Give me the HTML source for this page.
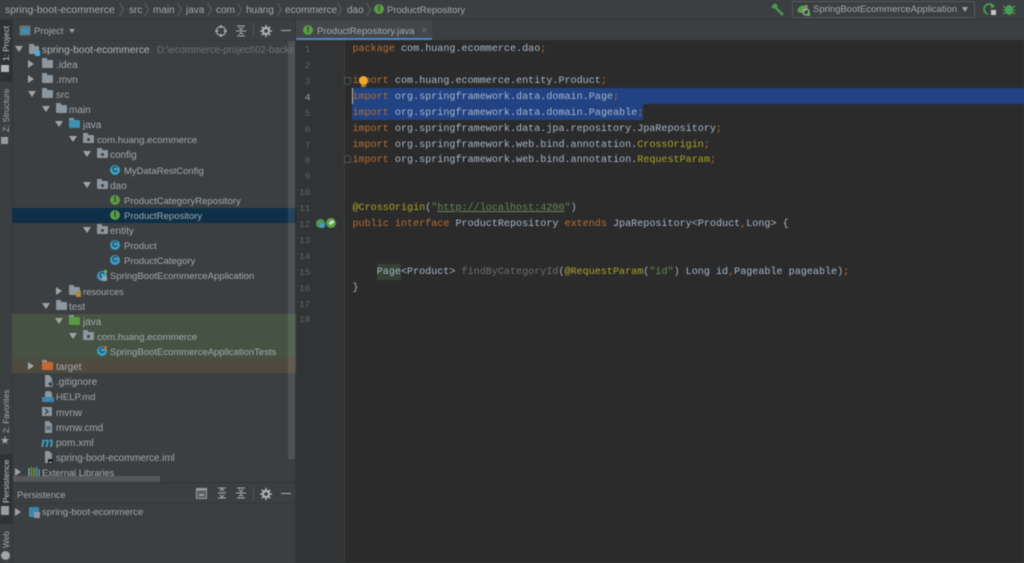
<!DOCTYPE html>
<html><head><meta charset="utf-8"><style>
html,body{margin:0;padding:0;width:1024px;height:563px;overflow:hidden;background:#3c3f41}
#w{position:absolute;left:0;top:0;width:1024px;height:563px;overflow:hidden;font-family:"Liberation Sans",sans-serif;color:#a4a9ad;filter:blur(.45px)}
.a{position:absolute}
.t{position:absolute;white-space:nowrap;font-size:10px;line-height:14px;height:14px;margin-top:2px}
.c{font-size:9.5px}
.ar{position:absolute;width:0;height:0}
.d{border-left:4px solid transparent;border-right:4px solid transparent;border-top:6px solid #a0a4a7}
.r{border-top:4px solid transparent;border-bottom:4px solid transparent;border-left:6px solid #a0a4a7}
.f{position:absolute;width:11px;height:8px;background:#8d979f;border-radius:1px}
.f:before{content:"";position:absolute;left:0;top:-2px;width:5px;height:2px;background:#8d979f}
.p:after{content:"";position:absolute;left:4px;top:3px;width:3px;height:3px;background:#3c3f41;border-radius:50%}
.ic{position:absolute;width:10px;height:10px;border-radius:50%;color:#2f3a40;font:bold 8px/10px "Liberation Sans",sans-serif;text-align:center}
.cc{background:#3b9fc6}.ii{background:#5b9b45}
.l{position:absolute;left:352.5px;height:16px;font:10.1px/16px "Liberation Mono",monospace;color:#a9b7c6;white-space:pre;margin-top:1.7px}
.n{position:absolute;left:296px;width:14.5px;text-align:right;font:9.5px/16px "Liberation Mono",monospace;color:#606366;margin-top:1.7px}
.k{color:#b96d2f}.y{color:#a8a428}.s{color:#6a8759}.g{color:#6b6f72}
.v{position:absolute;writing-mode:vertical-rl;transform:rotate(180deg);font-size:8.3px;line-height:12px;white-space:nowrap;color:#a4a9ad;left:0;width:12px;text-align:left}
.se{position:absolute;top:3px}
</style></head><body><div id="w">

<!-- backgrounds -->
<div class="a" style="left:296px;top:40px;width:728px;height:523px;background:#2b2b2b"></div>
<div class="a" style="left:296px;top:40px;width:48px;height:523px;background:#313335"></div>
<div class="a" style="left:344px;top:40px;width:1px;height:523px;background:#3a3c3e"></div>
<div class="a" style="left:0;top:19px;width:1024px;height:1px;background:#323436"></div>
<div class="a" style="left:12px;top:40px;width:284px;height:1px;background:#35383a"></div>
<div class="a" style="left:0;top:20px;width:12px;height:543px;background:#3c3f41"></div>
<div class="a" style="left:12px;top:20px;width:1px;height:543px;background:#333537"></div>
<div class="a" style="left:295px;top:20px;width:1px;height:543px;background:#323436"></div>
<div class="a" style="left:0;top:20px;width:12px;height:62px;background:#2f3133"></div>
<div class="a" style="left:0;top:454px;width:12px;height:70px;background:#2f3133"></div>

<!-- row highlights -->
<div class="a" style="left:12px;top:208px;width:284px;height:15px;background:#0d2f47"></div>
<div class="a" style="left:12px;top:314px;width:284px;height:44px;background:#465243"></div>
<div class="a" style="left:12px;top:358px;width:284px;height:15px;background:#4f4a40"></div>

<!-- scrollbars -->
<div class="a" style="left:288px;top:41px;width:7px;height:418px;background:rgba(255,255,255,.1)"></div>
<div class="a" style="left:13px;top:482px;width:283px;height:1px;background:#323436"></div>
<div class="a" style="left:13px;top:503px;width:283px;height:1px;background:#35383a"></div>

<!-- breadcrumb -->
<div class="t" style="left:5px;top:2px;font-size:10.4px">spring-boot-ecommerce</div>
<svg class="se" style="left:119px" width="5" height="13" viewBox="0 0 5 13"><path d="M.5 0L4.500 6.500L.5 13" fill="none" stroke="#5f6264"/></svg>
<div class="t" style="left:129px;top:2px">src</div>
<svg class="se" style="left:144px" width="5" height="13" viewBox="0 0 5 13"><path d="M.5 0L4.500 6.500L.5 13" fill="none" stroke="#5f6264"/></svg>
<div class="t" style="left:153px;top:2px">main</div>
<svg class="se" style="left:177px" width="5" height="13" viewBox="0 0 5 13"><path d="M.5 0L4.500 6.500L.5 13" fill="none" stroke="#5f6264"/></svg>
<div class="t" style="left:186px;top:2px">java</div>
<svg class="se" style="left:207px" width="5" height="13" viewBox="0 0 5 13"><path d="M.5 0L4.500 6.500L.5 13" fill="none" stroke="#5f6264"/></svg>
<div class="t" style="left:216px;top:2px">com</div>
<svg class="se" style="left:237px" width="5" height="13" viewBox="0 0 5 13"><path d="M.5 0L4.500 6.500L.5 13" fill="none" stroke="#5f6264"/></svg>
<div class="t" style="left:246px;top:2px">huang</div>
<svg class="se" style="left:277px" width="5" height="13" viewBox="0 0 5 13"><path d="M.5 0L4.500 6.500L.5 13" fill="none" stroke="#5f6264"/></svg>
<div class="t" style="left:285px;top:2px">ecommerce</div>
<svg class="se" style="left:337px" width="5" height="13" viewBox="0 0 5 13"><path d="M.5 0L4.500 6.500L.5 13" fill="none" stroke="#5f6264"/></svg>
<div class="t" style="left:347px;top:2px">dao</div>
<svg class="se" style="left:366px" width="5" height="13" viewBox="0 0 5 13"><path d="M.5 0L4.500 6.500L.5 13" fill="none" stroke="#5f6264"/></svg>
<div class="ic ii" style="left:374px;top:4px">I</div>
<div class="t c" style="left:387px;top:2px">ProductRepository</div>

<!-- run toolbar -->
<svg class="a" style="left:770px;top:2px" width="16" height="15" viewBox="0 0 16 15"><path d="M1 5 L5 1 L8 4 L5 7 Z" fill="#499c54"/><path d="M6 6 L13 13" stroke="#499c54" stroke-width="2.4"/></svg>
<div class="a" style="left:792px;top:1px;width:181px;height:15px;border:1px solid #55585a;border-radius:2px"></div>
<svg class="a" style="left:797px;top:4px" width="14" height="12" viewBox="0 0 14 12"><path d="M0 7 C1 2 6 1 11 1 C11 6 8 9 3 9 Z" fill="#5d9b47"/><circle cx="9" cy="8" r="3" fill="none" stroke="#aeb2b5" stroke-width="1.2"/><rect x="10" y="9" width="3" height="3" fill="#2ecc40"/></svg>
<div class="t" style="left:813px;top:1px;font-size:9.5px">SpringBootEcommerceApplication</div>
<div class="ar" style="left:962px;top:7px;border-left:3.5px solid transparent;border-right:3.5px solid transparent;border-top:5px solid #a0a4a7"></div>
<svg class="a" style="left:983px;top:2px" width="14" height="14" viewBox="0 0 14 14"><path d="M10 4 A5 5 0 1 0 5 12" fill="none" stroke="#499c54" stroke-width="1.8"/><path d="M8 1 L12 4 L8 7 Z" fill="#499c54"/><rect x="8" y="8" width="5" height="5" fill="#c4c6c8"/></svg>
<svg class="a" style="left:1002px;top:3px" width="14" height="13" viewBox="0 0 14 13"><ellipse cx="7" cy="7" rx="4" ry="5" fill="#499c54"/><path d="M1 3 L4 5 M13 3 L10 5 M1 7 H3 M13 7 H11 M1 11 L4 9 M13 11 L10 9" stroke="#499c54" stroke-width="1.2"/></svg>

<!-- project header -->
<svg class="a" style="left:19px;top:25px" width="12" height="11" viewBox="0 0 12 11"><rect x=".5" y=".5" width="11" height="10" fill="#6b7073" /><rect x="2" y="3" width="8" height="6" fill="#3f8fb5"/></svg>
<div class="t" style="left:34px;top:23px;font-size:9.5px">Project</div>
<div class="ar" style="left:69px;top:29px;border-left:3.5px solid transparent;border-right:3.5px solid transparent;border-top:4.5px solid #a0a4a7"></div>
<svg class="a" style="left:215px;top:25px" width="12" height="12" viewBox="0 0 12 12"><circle cx="6" cy="6" r="4.6" fill="none" stroke="#afb1b3" stroke-width="1.2"/><path d="M6 0V3.5M6 8.5V12M0 6H3.5M8.5 6H12" stroke="#afb1b3" stroke-width="1.2"/></svg>
<svg class="a" style="left:236px;top:25px" width="10" height="12" viewBox="0 0 10 12"><path d="M0 6H10M1 1H9M1 11H9" stroke="#afb1b3"/><path d="M3 2.5L5 4.5L7 2.5M3 9.5L5 7.5L7 9.5" stroke="#afb1b3" fill="none"/></svg>
<div class="a" style="left:253px;top:23px;width:1px;height:14px;background:#4d5052"></div>
<svg class="a" style="left:260px;top:25px" width="12" height="12" viewBox="0 0 12 12"><circle cx="6" cy="6" r="3" fill="none" stroke="#afb1b3" stroke-width="2.2"/><path d="M6 0V2.5M6 9.5V12M0 6H2.5M9.5 6H12M1.8 1.8L3.4 3.4M8.6 8.6L10.2 10.2M1.8 10.2L3.4 8.6M8.6 3.4L10.2 1.8" stroke="#afb1b3" stroke-width="1.6"/></svg>
<div class="a" style="left:281px;top:30px;width:10px;height:1.3px;background:#afb1b3"></div>

<!-- tabs -->
<div class="a" style="left:296px;top:20px;width:136px;height:18px;background:#43474a"></div>
<div class="a" style="left:296px;top:38px;width:136px;height:2px;background:#4a88c7"></div>
<div class="ic ii" style="left:303px;top:25px">I</div>
<div class="t" style="left:317px;top:23px;font-size:9.5px">ProductRepository.java</div>
<div class="t" style="left:421px;top:22px;color:#6f7274;font-size:11px">×</div>

<!-- tree -->
<div class="ar d" style="left:15px;top:46px"></div>
<div class="f" style="left:29px;top:46px;width:10px"></div>
<div class="a" style="left:35px;top:51px;width:5px;height:5px;background:#3fb4e8"></div>
<div class="t" style="left:42px;top:41.500px;font-size:10.2px;color:#b0b4b7">spring-boot-ecommerce</div>
<div class="t" style="left:157px;top:41.500px;color:#6f7376;font-size:9.700px;width:138px;overflow:hidden">D:\ecommerce-project\02-backend</div>

<div class="ar r" style="left:28px;top:60px"></div><div class="f" style="left:42px;top:60px"></div><div class="t" style="left:56px;top:57px">.idea</div>
<div class="ar r" style="left:28px;top:75px"></div><div class="f" style="left:42px;top:75px"></div><div class="t" style="left:56px;top:72px">.mvn</div>
<div class="ar d" style="left:28px;top:91px"></div><div class="f" style="left:42px;top:90px"></div><div class="t" style="left:56px;top:87px">src</div>
<div class="ar d" style="left:42px;top:106px"></div><div class="f" style="left:56px;top:105px"></div><div class="t" style="left:69px;top:102px">main</div>
<div class="ar d" style="left:55px;top:121px"></div><div class="f" style="left:69px;top:120px;background:#3f8fb5"></div><div class="t" style="left:83px;top:117px">java</div>
<div class="ar d" style="left:69px;top:136px"></div><div class="f p" style="left:83px;top:135px"></div><div class="t" style="left:97px;top:132px;font-size:9.6px">com.huang.ecommerce</div>
<div class="ar d" style="left:83px;top:151px"></div><div class="f p" style="left:97px;top:150px"></div><div class="t" style="left:110px;top:147px">config</div>
<div class="ic cc" style="left:110px;top:165px">C</div><div class="t c" style="left:124px;top:163px">MyDataRestConfig</div>
<div class="ar d" style="left:83px;top:182px"></div><div class="f p" style="left:97px;top:181px"></div><div class="t" style="left:110px;top:178px">dao</div>
<div class="ic ii" style="left:110px;top:195px">I</div><div class="t c" style="left:124px;top:193px">ProductCategoryRepository</div>
<div class="ic ii" style="left:110px;top:210px">I</div><div class="t c" style="left:124px;top:208px">ProductRepository</div>
<div class="ar d" style="left:83px;top:227px"></div><div class="f p" style="left:97px;top:226px"></div><div class="t" style="left:110px;top:223px">entity</div>
<div class="ic cc" style="left:110px;top:240px">C</div><div class="t c" style="left:124px;top:238px">Product</div>
<div class="ic cc" style="left:110px;top:255px">C</div><div class="t c" style="left:124px;top:253px">ProductCategory</div>
<div class="ic cc" style="left:97px;top:271px">C</div><div class="a" style="left:104px;top:270px;width:3px;height:3px;background:#5cb85c"></div><div class="a" style="left:102px;top:276px;width:5px;height:5px;background:#8fa3ad"></div><div class="t c" style="left:110px;top:268px">SpringBootEcommerceApplication</div>
<div class="ar r" style="left:56px;top:287px"></div><div class="f" style="left:69px;top:287px"></div><div class="a" style="left:76px;top:291px;width:5px;height:6px;background:#b08a3c"></div><div class="t" style="left:83px;top:283px;font-size:9.3px">resources</div>
<div class="ar d" style="left:42px;top:303px"></div><div class="f" style="left:56px;top:302px"></div><div class="t" style="left:69px;top:299px">test</div>
<div class="ar d" style="left:55px;top:318px"></div><div class="f" style="left:69px;top:317px;background:#5a9a40"></div><div class="t" style="left:83px;top:314px">java</div>
<div class="ar d" style="left:69px;top:333px"></div><div class="f p" style="left:83px;top:332px"></div><div class="t" style="left:97px;top:329px;font-size:9.6px">com.huang.ecommerce</div>
<div class="ic cc" style="left:97px;top:346px">C</div><div class="a" style="left:104px;top:346px;width:3px;height:3px;background:#c9652c"></div><div class="t c" style="left:110px;top:344px">SpringBootEcommerceApplicationTests</div>
<div class="ar r" style="left:28px;top:362px"></div><div class="f" style="left:42px;top:362px;background:#c46a30"></div><div class="t" style="left:56px;top:359px">target</div>

<svg class="a" style="left:43px;top:375px" width="10" height="12" viewBox="0 0 10 12"><path d="M2 0H6L9 3V12H2Z" fill="#8d979f"/><circle cx="7.5" cy="9" r="2.4" fill="#3c3f41" stroke="#8d979f"/></svg>
<div class="t" style="left:56px;top:374px">.gitignore</div>
<svg class="a" style="left:42px;top:391px" width="12" height="12" viewBox="0 0 12 12"><path d="M4 0H8L10 2V6H3V2Z" fill="#8d979f"/><rect y="6" width="12" height="5" fill="#3a87ad"/></svg>
<div class="t c" style="left:56px;top:389px">HELP.md</div>
<svg class="a" style="left:42px;top:407px" width="11" height="10" viewBox="0 0 11 10"><rect width="10" height="9" fill="#8d979f"/><path d="M3 2L6 4.500L3 7" stroke="#3c3f41" stroke-width="1.4" fill="none"/></svg>
<div class="t" style="left:56px;top:405px">mvnw</div>
<svg class="a" style="left:43px;top:421px" width="10" height="12" viewBox="0 0 10 12"><path d="M2 0H6L9 3V12H2Z" fill="#8d979f"/><path d="M3.500 6H7.500M3.500 8H7.500" stroke="#3c3f41"/></svg>
<div class="t" style="left:56px;top:420px">mvnw.cmd</div>
<div class="t" style="left:41px;top:433px;color:#3b9fc6;font:italic bold 14px/14px 'Liberation Sans',sans-serif">m</div>
<div class="t" style="left:56px;top:435px">pom.xml</div>
<svg class="a" style="left:43px;top:451px" width="11" height="13" viewBox="0 0 11 13"><path d="M2 0H6L9 3V12H2Z" fill="#8d979f"/><rect x="5" y="8" width="5" height="5" fill="#1d1d1d"/><rect x="6" y="11" width="3" height="1" fill="#ccc"/></svg>
<div class="t" style="left:56px;top:450px;font-size:9.8px">spring-boot-ecommerce.iml</div>
<div class="ar r" style="left:15px;top:468px"></div>
<svg class="a" style="left:28px;top:467px" width="12" height="10" viewBox="0 0 12 10"><path d="M1 1V10" stroke="#8d979f" stroke-width="1.500"/><path d="M3.500 0V10" stroke="#5b9b45" stroke-width="1.500"/><path d="M6 1V10" stroke="#a8a428" stroke-width="1.200"/><path d="M8.500 0V10" stroke="#3b9fc6" stroke-width="1.500"/><path d="M11 2V10" stroke="#8d979f" stroke-width="1.200"/></svg>
<div class="t" style="left:42px;top:464px;font-size:9.3px">External Libraries</div>
<div class="a" style="left:13px;top:475.500px;width:147px;height:6px;background:rgba(90,92,94,.85)"></div>

<!-- Persistence panel -->
<div class="t" style="left:17px;top:485.500px;font-size:9.3px">Persistence</div>
<svg class="a" style="left:196px;top:488px" width="11" height="11" viewBox="0 0 11 11"><rect x=".5" y=".5" width="10" height="10" fill="#5a5d5f" stroke="#9a9d9f"/><rect x="1" y="1" width="9" height="1.500" fill="#9a9d9f"/><rect x="3" y="6" width="5" height="2" fill="#9a9d9f"/></svg>
<svg class="a" style="left:217px;top:487px" width="10" height="12" viewBox="0 0 10 12"><path d="M1 1H9M1 11H9M1 6H9" stroke="#afb1b3"/><path d="M3 4L5 2L7 4M3 8L5 10L7 8" stroke="#afb1b3" fill="none"/></svg>
<svg class="a" style="left:236px;top:487px" width="10" height="12" viewBox="0 0 10 12"><path d="M0 6H10M1 1H9M1 11H9" stroke="#afb1b3"/><path d="M3 2.500L5 4.500L7 2.500M3 9.500L5 7.500L7 9.500" stroke="#afb1b3" fill="none"/></svg>
<div class="a" style="left:253px;top:486px;width:1px;height:14px;background:#4d5052"></div>
<svg class="a" style="left:260px;top:488px" width="12" height="12" viewBox="0 0 12 12"><circle cx="6" cy="6" r="3" fill="none" stroke="#afb1b3" stroke-width="2.200"/><path d="M6 0V2.500M6 9.500V12M0 6H2.500M9.500 6H12M1.800 1.800L3.400 3.400M8.600 8.600L10.200 10.200M1.800 10.200L3.400 8.600M8.600 3.400L10.200 1.800" stroke="#afb1b3" stroke-width="1.600"/></svg>
<div class="a" style="left:281px;top:493px;width:10px;height:1.300px;background:#afb1b3"></div>
<div class="ar r" style="left:15px;top:508px"></div>
<svg class="a" style="left:29px;top:507px" width="11" height="11" viewBox="0 0 11 11"><rect width="10" height="10" fill="#3a87ad"/><rect x="5" y="5" width="6" height="6" fill="#8d979f"/></svg>
<div class="t" style="left:42px;top:504px;font-size:9.6px">spring-boot-ecommerce</div>

<!-- vertical tool tabs -->
<div class="v" style="top:27px;height:34px;color:#c4c7c9">1: Project</div>
<div class="a" style="left:1px;top:65px;width:8px;height:7px;background:#b4b7b9"></div>
<div class="v" style="top:90px;height:42px">Z: Structure</div>
<div class="a" style="left:1px;top:137px;width:7px;height:7px;background:#9a9d9f"></div>
<div class="v" style="top:392px;height:41px">2: Favorites</div>
<div class="a" style="left:0;top:434px;font-size:11px;line-height:14px;color:#a4a9ad">★</div>
<div class="v" style="top:461px;height:42px;color:#c4c7c9">Persistence</div>
<div class="a" style="left:1px;top:506px;width:8px;height:9px;background:#9a9d9f"></div>
<div class="v" style="top:531px;height:17px">Web</div>
<div class="a" style="left:1px;top:551px;width:9px;height:9px;border-radius:50%;background:#a0a4a7"></div>

<!-- line numbers -->
<div class="n" style="top:40.500px">1</div>
<div class="n" style="top:56.400px">2</div>
<div class="n" style="top:72.300px">3</div>
<div class="n" style="top:88.200px;color:#a4a3a3">4</div>
<div class="n" style="top:104.100px">5</div>
<div class="n" style="top:120px">6</div>
<div class="n" style="top:135.900px">7</div>
<div class="n" style="top:151.800px">8</div>
<div class="n" style="top:167.700px">9</div>
<div class="n" style="top:183.600px">10</div>
<div class="n" style="top:199.500px">11</div>
<div class="n" style="top:215.400px">12</div>
<div class="n" style="top:231.300px">13</div>
<div class="n" style="top:247.200px">14</div>
<div class="n" style="top:263.100px">15</div>
<div class="n" style="top:279px">16</div>
<div class="n" style="top:294.900px">17</div>
<div class="n" style="top:310.800px">18</div>

<!-- selection -->
<div class="a" style="left:352px;top:88px;width:672px;height:16px;background:#214283"></div>
<div class="a" style="left:352px;top:104px;width:291px;height:16px;background:#214283"></div>
<div class="a" style="left:352px;top:88px;width:1px;height:16px;background:#bbb"></div>

<!-- gutter marks -->
<div class="a" style="left:344px;top:77px;width:5px;height:6px;border:1px solid #55585a;border-radius:0 0 3px 3px"></div>
<div class="a" style="left:344px;top:155px;width:5px;height:6px;border:1px solid #55585a;border-radius:3px 3px 0 0"></div>
<div class="a" style="left:316px;top:219px;width:9px;height:9px;border-radius:50%;background:#4d9a55"></div>
<div class="a" style="left:320px;top:223px;width:5px;height:5px;border-radius:50%;background:#3b9fc6"></div>
<div class="a" style="left:326px;top:218px;width:10px;height:10px;border-radius:50%;background:#5aa347"></div>
<div class="a" style="left:329px;top:221px;width:5px;height:3px;background:#d5d8da;transform:rotate(-40deg)"></div>

<!-- code -->
<div class="l" style="top:40.500px"><span class="k">package</span> com.huang.ecommerce.dao<span class="k">;</span></div>
<div class="l" style="top:72.300px"><span class="k">import</span> com.huang.ecommerce.entity.Product<span class="k">;</span></div>
<div class="a" style="left:359px;top:76px;width:9px;height:9px;border-radius:50%;background:#f0a732"></div>
<div class="a" style="left:361px;top:85px;width:5px;height:2px;background:#a58038"></div>
<div class="l" style="top:88.200px"><span class="k">import</span> org.springframework.data.domain.Page<span class="k">;</span></div>
<div class="l" style="top:104.100px"><span class="k">import</span> org.springframework.data.domain.Pageable<span class="k">;</span></div>
<div class="l" style="top:120px"><span class="k">import</span> org.springframework.data.jpa.repository.JpaRepository<span class="k">;</span></div>
<div class="l" style="top:135.900px"><span class="k">import</span> org.springframework.web.bind.annotation.<span class="y">CrossOrigin</span><span class="k">;</span></div>
<div class="l" style="top:151.800px"><span class="k">import</span> org.springframework.web.bind.annotation.<span class="y">RequestParam</span><span class="k">;</span></div>
<div class="l" style="top:199.500px"><span class="y">@CrossOrigin</span>(<span class="s">"<u>http://localhost:4200</u>"</span>)</div>
<div class="l" style="top:215.400px"><span class="k">public interface</span> ProductRepository <span class="k">extends</span> JpaRepository&lt;Product<span class="k">,</span>Long&gt; {</div>
<div class="a" style="left:376.500px;top:264px;width:24px;height:16px;background:#344134"></div>
<div class="l" style="top:263.100px">    Page&lt;Product&gt; <span class="g">findByCategoryId</span>(<span class="y">@RequestParam</span>(<span class="s">"id"</span>) Long id<span class="k">,</span>Pageable pageable)<span class="k">;</span></div>
<div class="l" style="top:279px">}</div>

</div></body></html>
